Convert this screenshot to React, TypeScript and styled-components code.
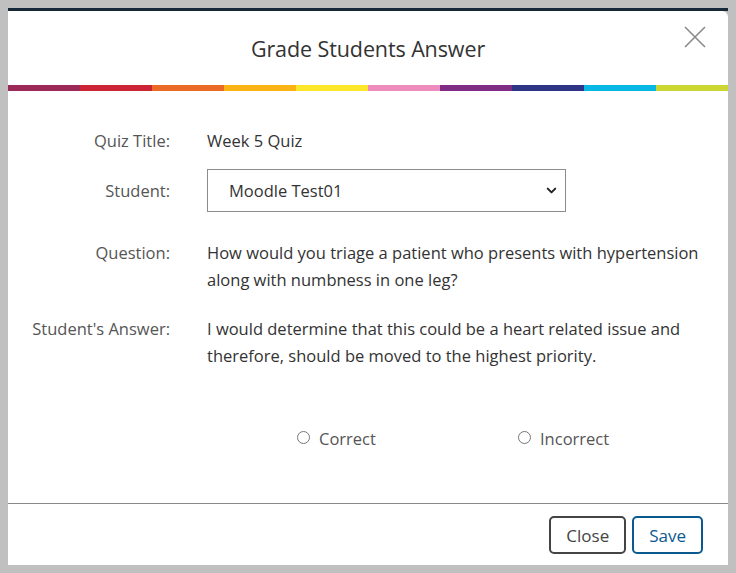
import styled, { createGlobalStyle } from 'styled-components';
import { ChevronDown } from 'lucide-react';

const stripeColors = [
  '#9b2a57',
  '#cc2336',
  '#ec6a27',
  '#fbb316',
  '#fde72a',
  '#ee8cbd',
  '#7f2d84',
  '#2e3587',
  '#05b7e2',
  '#cbd633',
];

const App = () => {
  return (
    <>
      <GlobalStyle />
      <Page>
        <TopBar />
        <Modal>
          <Header>
            <Title>Grade Students Answer</Title>
            <CloseIcon aria-label="close">
              <svg width="24" height="24" viewBox="0 0 24 24">
                <path d="M2 2 L22 22 M22 2 L2 22" stroke="#8a8a8a" strokeWidth="1.6" fill="none" />
              </svg>
            </CloseIcon>
          </Header>

          <Stripe>
            {stripeColors.map((c) => (
              <StripeSeg key={c} $color={c} />
            ))}
          </Stripe>

          <Form>
            <Label $mt={36}>Quiz Title:</Label>
            <Value $mt={36}>Week 5 Quiz</Value>

            <Label $mt={15} $center>Student:</Label>
            <SelectWrap $mt={15}>
              <Select defaultValue="moodle">
                <option value="moodle">Moodle Test01</option>
              </Select>
              <Chevron>
                <ChevronDown size={15} strokeWidth={3.2} />
              </Chevron>
            </SelectWrap>

            <Label $mt={27}>Question:</Label>
            <Value $mt={27}>
              How would you triage a patient who presents with hypertension along with numbness in one leg?
            </Value>

            <Label $mt={22}>Student's Answer:</Label>
            <Value $mt={22}>
              I would determine that this could be a heart related issue and therefore, should be moved to the
              highest priority.
            </Value>
          </Form>

          <RadioRow>
            <RadioLabel $width={221}>
              <Radio type="radio" name="grade" />
              Correct
            </RadioLabel>
            <RadioLabel>
              <Radio type="radio" name="grade" />
              Incorrect
            </RadioLabel>
          </RadioRow>

          <Footer>
            <Button $color="#444444">Close</Button>
            <Button $color="#0b5a8f">Save</Button>
          </Footer>
        </Modal>
      </Page>
    </>
  );
};

export default App;

const GlobalStyle = createGlobalStyle`
  html, body {
    margin: 0;
    padding: 0;
    background: #c0c0c0;
  }
  body {
    font-family: 'Open Sans', 'Liberation Sans', sans-serif;
  }
  * {
    box-sizing: border-box;
  }
`;

const Page = styled.div`
  width: 736px;
  height: 573px;
  padding: 8px 8px 0;
  background: #c0c0c0;
`;

const TopBar = styled.div`
  height: 3px;
  background: #172838;
`;

const Modal = styled.div`
  background: #fff;
  height: 554px;
  border-radius: 0 6px 0 0;
  display: flex;
  flex-direction: column;
`;

const Header = styled.div`
  position: relative;
  height: 74px;
  display: flex;
  align-items: center;
  justify-content: center;
`;

const Title = styled.h1`
  margin: 0;
  font-size: 21.5px;
  font-weight: 400;
  color: #333;
  letter-spacing: -0.1px;
`;

const CloseIcon = styled.button`
  position: absolute;
  top: 14px;
  right: 21px;
  padding: 0;
  border: 0;
  background: none;
  display: flex;
`;

const Stripe = styled.div`
  display: flex;
  height: 6px;
`;

const StripeSeg = styled.div<{ $color: string }>`
  flex: 1;
  background: ${(p) => p.$color};
`;

const Form = styled.div`
  display: grid;
  grid-template-columns: 162px 1fr;
  column-gap: 37px;
  padding-right: 16px;
  font-size: 16.5px;
  line-height: 27px;
`;

const Label = styled.div<{ $mt: number; $center?: boolean }>`
  margin-top: ${(p) => p.$mt}px;
  text-align: right;
  color: #555;
  align-self: ${(p) => (p.$center ? 'center' : 'start')};
`;

const Value = styled.div<{ $mt: number }>`
  margin-top: ${(p) => p.$mt}px;
  color: #333;
`;

const SelectWrap = styled.div<{ $mt: number }>`
  margin-top: ${(p) => p.$mt}px;
  position: relative;
  width: 359px;
`;

const Select = styled.select`
  appearance: none;
  width: 100%;
  height: 43px;
  border: 1px solid #8c8c8c;
  border-radius: 0;
  background: #fff;
  padding: 0 30px 0 21px;
  font-family: inherit;
  font-size: 16.5px;
  color: #333;
`;

const Chevron = styled.span`
  position: absolute;
  right: 7px;
  top: 14px;
  color: #222;
  pointer-events: none;
  display: flex;
`;

const RadioRow = styled.div`
  display: flex;
  margin-top: 56px;
  padding-left: 289px;
  font-size: 16.5px;
  line-height: 27px;
  color: #555;
`;

const RadioLabel = styled.label<{ $width?: number }>`
  display: flex;
  align-items: center;
  width: ${(p) => (p.$width ? `${p.$width}px` : 'auto')};
`;

const Radio = styled.input`
  width: 13px;
  height: 13px;
  margin: 0 9px 2px 0;
`;

const Footer = styled.div`
  margin-top: auto;
  border-top: 1px solid #888;
  display: flex;
  justify-content: flex-end;
  gap: 6px;
  padding: 12px 25px 11px;
`;

const Button = styled.button<{ $color: string }>`
  height: 38px;
  padding: 0 15px;
  border: 2px solid ${(p) => p.$color};
  border-radius: 5px;
  background: #fff;
  color: ${(p) => p.$color};
  font-family: inherit;
  font-size: 17px;
`;
